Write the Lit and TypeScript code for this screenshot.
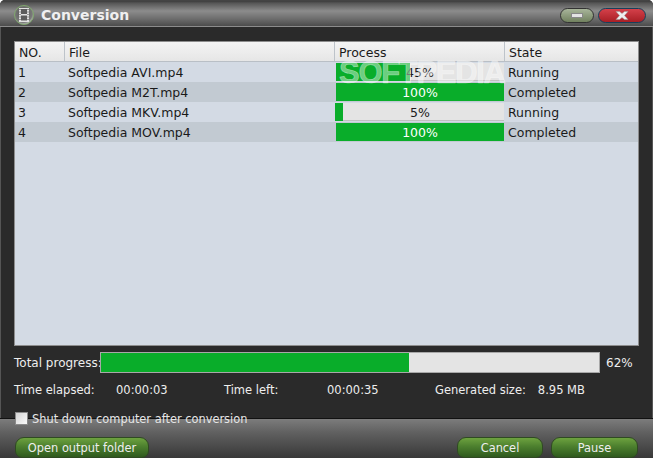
import { LitElement, html, css } from "lit";
import { customElement } from "lit/decorators.js";

const rows = [
  { n: 1, f: "Softpedia AVI.mp4", p: 45, w: 44, s: "Running" },
  { n: 2, f: "Softpedia M2T.mp4", p: 100, w: 100, s: "Completed" },
  { n: 3, f: "Softpedia MKV.mp4", p: 5, w: 5, s: "Running" },
  { n: 4, f: "Softpedia MOV.mp4", p: 100, w: 100, s: "Completed" },
];

@customElement("app-root")
export class AppRoot extends LitElement {
  static styles = css`
    :host { display: block; width: 653px; height: 458px; overflow: hidden; background: #fff; }
    * { box-sizing: border-box; }
    .win { width: 653px; height: 458px; display: flex; flex-direction: column; position: relative;
      font: 12px "DejaVu Sans", Verdana, sans-serif; color: #1a1a1a; background: #2a2a2a;
      border-radius: 5px 5px 0 0; overflow: hidden; }
    .title { height: 27px; flex: none; display: flex; align-items: center; padding: 3px 7px 0 14px; gap: 7px;
      background: linear-gradient(#3c3c3c 0, #555 8%, #8c8c8c 40%, #6e6e6e 70%, #4c4c4c 100%);
      border-top: 1px solid #444; border-bottom: 1px solid #8c8c8c; }
    .title .name { font: bold 14px "DejaVu Sans", sans-serif; color: #f0f0f0; flex: 1; }
    .ctl { height: 15px; border-radius: 8px; display: flex; align-items: center; justify-content: center; }
    .min { width: 34px; border: 1px solid #333; background: linear-gradient(#a8b59a, #71815f); }
    .min i { display: block; width: 12px; height: 5px; background: #e4e4e4; border: 1px solid #888; }
    .close { width: 48px; margin-left: -3px; border: 1px solid #17405c; background: linear-gradient(#d4404a, #a81f25); }
    .body { flex: 1; min-height: 0; padding: 14px 13px 0; display: flex; flex-direction: column; position: relative; z-index: 1;
      border-left: 1px solid #555; border-right: 1px solid #555; }
    .body > * { flex: none; }
    .table { height: 305px; background: #d3dae4; border: 1px solid #8d8d8d; position: relative; font-size: 12.5px; }
    .row { display: grid; grid-template-columns: 50px 270px 170px 1fr; height: 20px; align-items: center; }
    .row.alt { background: #c2cad2; }
    .head { height: 20px; background: linear-gradient(#f4f4f4, #e6e6e6); border-bottom: 1px solid #b9bfc6; }
    .head > div { height: 100%; display: flex; align-items: center; padding: 1px 0 0 4px; border-right: 1px solid #bdc3ca; }
    .head > div:last-child { border-right: 0; }
    .cell { padding: 1px 0 0 3px; white-space: nowrap; }
    .pcell { height: 18px; background: #e4e4e4; border-bottom: 1px solid #c0c0c0; position: relative; margin: 0 1px;
      display: flex; align-items: center; justify-content: center; padding-top: 1px; }
    .pcell .fill { position: absolute; left: 0; top: 0; bottom: -1px; background: #09ad2a; }
    .pcell .fill.small { left: -1px; }
    .pcell span { position: relative; }
    .pcell.full { color: #fff; }
    .mark { position: absolute; left: 324px; top: 13px; font: bold 31px "Liberation Sans", Arial, sans-serif; letter-spacing: -1.3px;
      color: rgba(255,255,255,.42); -webkit-text-stroke: .6px rgba(255,255,255,.42); pointer-events: none; white-space: nowrap; }
    .total { display: flex; align-items: center; margin-top: 5px; height: 22px; color: #eee; padding-top: 1px; }
    .total .lab { width: 86px; flex: none; white-space: nowrap; }
    .bar { width: 500px; height: 21px; background: #e4e4e4; border: 1px solid #a8a8a8; flex: none; }
    .bar .fill { height: 100%; background: #09ad2a; }
    .total .pct { margin-left: 6px; }
    .times { display: grid; grid-template-columns: 102px 108px 103px 108px 1fr; margin-top: 7px; height: 20px; align-items: center; color: #eee; font-size: 11.5px; white-space: nowrap; }
    .times .sz { display: flex; gap: 12px; }
    .shut { display: flex; align-items: center; gap: 4px; margin-top: 12px; height: 13px; position: relative; color: #e6e6e6; font-size: 11.4px; white-space: nowrap; }
    .shut b { width: 13px; height: 13px; flex: none; margin-left: 1px; background: linear-gradient(135deg, #d4d4d4, #fafafa); border: 1px solid #8a8a8a; }
    .foot { height: 40px; flex: none; border-top: 1px solid #111; display: flex; align-items: flex-end; padding: 0 15px 0; gap: 8px;
      background: linear-gradient(#7c7c7c, #606060 35%, #383838 100%); }
    .btn { height: 21px; border-radius: 9px 9px 7px 7px; border: 1px solid #2f4a22; color: #eee; font-size: 11.4px; padding-top: 1px;
      display: flex; align-items: center; justify-content: center; background: linear-gradient(#6da23f, #4c7f2e 45%, #2f5a1e); white-space: nowrap; }
    .b1 { width: 134px; margin-right: auto; }
    .b2 { width: 86px; }
    .b3 { width: 87px; }
  `;
  render() {
    return html`<div class="win">
      <div class="title">
        <svg width="20" height="20" viewBox="0 0 20 20">
          <defs><radialGradient id="g" cx=".45" cy=".4" r=".65"><stop offset="0" stop-color="#555"/><stop offset=".75" stop-color="#7a7a7a"/><stop offset="1" stop-color="#dcdcdc"/></radialGradient></defs>
          <circle cx="10" cy="10" r="9.5" fill="url(#g)" stroke="#7fa86c"/>
          <rect x="5" y="3" width="10" height="14" fill="#e2e2e2"/>
          <rect x="7" y="4" width="6" height="5" fill="#5c5c5c"/><rect x="7" y="10.500" width="6" height="5" fill="#5c5c5c"/>
          <path d="M5.500 4.500h1M5.500 7h1M5.500 9.500h1M5.500 12h1M5.500 14.500h1M13.500 4.500h1M13.500 7h1M13.500 9.500h1M13.500 12h1M13.500 14.500h1" stroke="#444"/>
        </svg>
        <span class="name">Conversion</span>
        <div class="ctl min"><i></i></div>
        <div class="ctl close"><svg width="16" height="9" viewBox="0 0 16 9"><path d="M2 .5h3.500l2.500 2 2.500-2H14l-3.500 4 3.500 4h-3.500L8 6.500l-2.500 2H2l3.500-4z" fill="#eee" stroke="#999" stroke-width=".5"/></svg></div>
      </div>
      <div class="body">
        <div class="table">
          <div class="row head"><div>NO.</div><div>File</div><div>Process</div><div>State</div></div>
          ${rows.map((r, i) => html`<div class="row ${i % 2 ? "alt" : ""}">
            <div class="cell">${r.n}</div><div class="cell">${r.f}</div>
            <div class="pcell ${r.p === 100 ? "full" : ""}"><div class="fill ${r.p < 10 ? "small" : ""}" style="width:${r.w}%"></div><span>${r.p}%</span></div>
            <div class="cell">${r.s}</div></div>`)}
          <div class="mark">SOFTPEDIA</div>
        </div>
        <div class="total"><div class="lab">Total progress:</div><div class="bar"><div class="fill" style="width:61.8%"></div></div><div class="pct">62%</div></div>
        <div class="times"><div>Time elapsed:</div><div>00:00:03</div><div>Time left:</div><div>00:00:35</div><div class="sz"><span>Generated size:</span><span>8.95 MB</span></div></div>
        <div class="shut"><b></b><span>Shut down computer after conversion</span></div>
      </div>
      <div class="foot"><div class="btn b1">Open output folder</div><div class="btn b2">Cancel</div><div class="btn b3">Pause</div></div>
    </div>`;
  }
}
